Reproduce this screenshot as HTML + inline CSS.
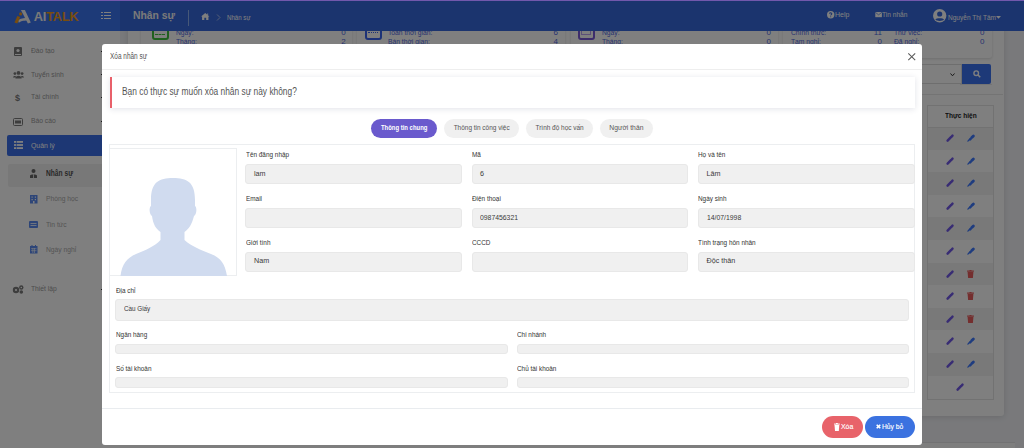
<!DOCTYPE html>
<html><head><meta charset="utf-8">
<style>
*{box-sizing:border-box;margin:0;padding:0}
html,body{width:1024px;height:448px;overflow:hidden;background:#f2f3f7;font-family:"Liberation Sans",sans-serif;position:relative}
.a{position:absolute}
.t{position:absolute;white-space:nowrap;line-height:1;transform-origin:0 50%}
.tc{position:absolute;white-space:nowrap;line-height:1;transform-origin:50% 50%;text-align:center}
svg{position:absolute;overflow:visible}
</style></head><body>

<!-- ============ BACKGROUND PAGE ============ -->
<div class="a" style="left:0;top:0;width:1024px;height:31px;z-index:3">

<div class="a" style="left:0;top:0;width:120px;height:31px;background:#3b75f1"></div>
<div class="a" style="left:120px;top:0;width:904px;height:31px;background:#3668dc"></div>

<!-- logo -->
<svg style="left:12px;top:7px" width="24" height="20" viewBox="0 0 24 20">
  <path d="M8.9 3.1 L12.9 3.1 L18.8 15.6 L15.9 16.6 Z" fill="#f2f2f2"/>
  <path d="M6.1 13.6 C7.6 12 9.6 11.3 14.8 11.1 L15.9 13.5 C10.8 13.6 8.9 14.1 6.8 15.8 Z" fill="#f2f2f2"/>
  <path d="M5.4 8.9 L8.2 10.1 L5.3 16.6 L2.5 15.4 Z" fill="#f29a1c"/>
  <circle cx="8.6" cy="6.9" r="1.55" fill="#f29a1c"/>
</svg>
<div class="t" style="left:33.8px;top:10.8px;font-size:12.8px;font-weight:700;color:#f2f2f2;letter-spacing:-0.2px">AI<span style="color:#f29a1c">TALK</span></div>

<!-- hamburger -->
<div class="a" style="left:101px;top:11.8px;width:2px;height:1.6px;background:#fff"></div>
<div class="a" style="left:103.5px;top:11.8px;width:7.5px;height:1.6px;background:#fff"></div>
<div class="a" style="left:101px;top:14.8px;width:2px;height:1.6px;background:#fff"></div>
<div class="a" style="left:103.5px;top:14.8px;width:7.5px;height:1.6px;background:#fff"></div>
<div class="a" style="left:101px;top:17.8px;width:2px;height:1.6px;background:#fff"></div>
<div class="a" style="left:103.5px;top:17.8px;width:7.5px;height:1.6px;background:#fff"></div>

<div class="t" style="left:133px;top:10.1px;font-size:11.5px;font-weight:700;color:#f4f4f4;transform:scaleX(.9)">Nhân sự</div>
<div class="a" style="left:187.6px;top:9.6px;width:1px;height:16px;background:#8fb0f0"></div>
<!-- home -->
<svg style="left:200.6px;top:13.2px" width="8.5" height="7" viewBox="0 0 9 7.5">
  <path d="M4.5 0 L9 3.7 L7.9 3.7 L7.9 7.5 L5.5 7.5 L5.5 5.2 L3.5 5.2 L3.5 7.5 L1.1 7.5 L1.1 3.7 L0 3.7 Z M6.6 0.6 L7.6 0.6 L7.6 2.4 L6.6 1.6 Z" fill="#fff"/>
</svg>
<svg style="left:216px;top:14px" width="5" height="7" viewBox="0 0 5 7">
  <path d="M1 0.5 L4 3.5 L1 6.5" stroke="#c8d4f0" stroke-width="0.8" fill="none"/>
</svg>
<div class="t" style="left:227.2px;top:15px;font-size:6.6px;color:#fff;transform:scaleX(.93)">Nhân sự</div>

<!-- right header -->
<svg style="left:827px;top:11px" width="7.4" height="7.4" viewBox="0 0 8 8">
  <circle cx="4" cy="4" r="4" fill="#fff"/>
  <path d="M2.8 3 C2.8 1.6 5.2 1.6 5.2 3 C5.2 4 4 4 4 5" stroke="#3668dc" stroke-width="1.1" fill="none"/>
  <circle cx="4" cy="6.3" r="0.6" fill="#3668dc"/>
</svg>
<div class="t" style="left:835px;top:10.9px;font-size:7.6px;color:#fff;transform:scaleX(.92)">Help</div>
<svg style="left:874.8px;top:12.2px" width="7.2" height="5.2" viewBox="0 0 7 5.5">
  <rect x="0" y="0" width="7" height="5.5" fill="#fff"/>
  <path d="M0 0.3 L3.5 3 L7 0.3" stroke="#3668dc" stroke-width="0.7" fill="none"/>
</svg>
<div class="t" style="left:882px;top:11px;font-size:7.6px;color:#fff;transform:scaleX(.87)">Tin nhắn</div>
<svg style="left:933.2px;top:8.6px" width="13.4" height="13.4" viewBox="0 0 14 14">
  <circle cx="7" cy="7" r="7" fill="#fff"/>
  <circle cx="7" cy="5.2" r="2.7" fill="#3668dc"/>
  <path d="M2.5 11.3 C3.3 9.3 10.7 9.3 11.5 11.3 C9.8 12.8 4.2 12.8 2.5 11.3 Z" fill="#3668dc"/>
</svg>
<div class="t" style="left:947.5px;top:13.5px;font-size:7.6px;color:#fff;transform:scaleX(.86)">Nguyễn Thị Tâm</div>
<svg style="left:995.8px;top:16.3px" width="5" height="3" viewBox="0 0 5 3">
  <path d="M0 0 L5 0 L2.5 2.8 Z" fill="#fff"/>
</svg>

</div>
<!-- sidebar -->
<div class="a" style="left:0;top:31px;width:120px;height:417px;background:#ffffff"></div>
<div id="sb">
  <div class="t" style="left:31px;top:47px;font-size:8px;color:#999;transform:scaleX(.84)">Đào tạo</div>
  <div class="t" style="left:31px;top:70.5px;font-size:8px;color:#999;transform:scaleX(.84)">Tuyển sinh</div>
  <div class="t" style="left:31px;top:93.4px;font-size:8px;color:#999;transform:scaleX(.84)">Tài chính</div>
  <div class="t" style="left:31px;top:117.4px;font-size:8px;color:#999;transform:scaleX(.84)">Báo cáo</div>
  <!-- icons -->
  <svg style="left:14px;top:46.5px" width="8" height="9" viewBox="0 0 8 9"><rect x="0" y="0" width="8" height="9" rx="1" fill="#7a7a7a"/><circle cx="4" cy="3.5" r="1.6" fill="#fff"/><rect x="1" y="7" width="6" height="1" fill="#fff"/></svg>
  <svg style="left:12.8px;top:71.3px" width="11" height="7.5" viewBox="0 0 11 7.5"><circle cx="5.5" cy="1.9" r="1.9" fill="#7a7a7a"/><circle cx="1.9" cy="2.6" r="1.4" fill="#7a7a7a"/><circle cx="9.1" cy="2.6" r="1.4" fill="#7a7a7a"/><path d="M2.4 7.5 C2.4 3.9 8.6 3.9 8.6 7.5 Z" fill="#7a7a7a"/><path d="M0 6.6 C0 4.3 3.4 4.3 3.4 6.6 Z" fill="#7a7a7a"/><path d="M7.6 6.6 C7.6 4.3 11 4.3 11 6.6 Z" fill="#7a7a7a"/></svg>
  <div class="t" style="left:15px;top:93.5px;font-size:9px;font-weight:700;color:#7a7a7a">$</div>
  <svg style="left:13px;top:117.5px" width="10" height="8" viewBox="0 0 10 8"><rect x="0.5" y="0.5" width="9" height="7" rx="1" fill="none" stroke="#7a7a7a" stroke-width="1"/><rect x="2" y="2.5" width="6" height="3" fill="#7a7a7a"/></svg>
  <div class="t" style="left:101px;top:50.5px;width:1.2px;height:1.2px;background:#333"></div>
  <div class="t" style="left:101px;top:74px;width:1.2px;height:1.2px;background:#333"></div>
  <div class="t" style="left:101px;top:97px;width:1.2px;height:1.2px;background:#333"></div>
  <div class="t" style="left:101px;top:121px;width:1.2px;height:1.2px;background:#333"></div>
  <div class="t" style="left:101px;top:289px;width:1.2px;height:1.2px;background:#333"></div>

  <div class="a" style="left:7px;top:134.5px;width:113px;height:21.5px;background:#3b6ee8;border-radius:2px"></div>
  <svg style="left:13.5px;top:141px" width="9" height="8" viewBox="0 0 9 8"><rect x="0" y="0" width="9" height="1.8" fill="#fff"/><rect x="0" y="3.1" width="9" height="1.8" fill="#fff"/><rect x="0" y="6.2" width="9" height="1.8" fill="#fff"/><rect x="2" y="0" width="0.6" height="8" fill="#3b6ee8"/></svg>
  <div class="t" style="left:31px;top:141.5px;font-size:8px;color:#fff;transform:scaleX(.86)">Quản lý</div>

  <div class="a" style="left:8px;top:163.5px;width:112px;height:23px;background:#f0f0f0;border-radius:2px"></div>
  <svg style="left:29.5px;top:169px" width="7" height="9" viewBox="0 0 7 9"><circle cx="3.5" cy="2" r="2" fill="#666"/><path d="M0 9 L0 6.5 C0 5 7 5 7 6.5 L7 9 Z" fill="#666"/><rect x="3.1" y="5.3" width="0.8" height="3.7" fill="#f0f0f0"/></svg>
  <div class="t" style="left:45.5px;top:169.4px;font-size:8.3px;font-weight:700;color:#505050;transform:scaleX(.8)">Nhân sự</div>
  <svg style="left:29.5px;top:195px" width="7.5" height="8.5" viewBox="0 0 7.5 8.5"><rect x="0" y="0" width="7.5" height="8.5" fill="#5a8af0"/><rect x="1.5" y="1.5" width="1.2" height="1.2" fill="#fff"/><rect x="4.8" y="1.5" width="1.2" height="1.2" fill="#fff"/><rect x="1.5" y="4" width="1.2" height="1.2" fill="#fff"/><rect x="4.8" y="4" width="1.2" height="1.2" fill="#fff"/><rect x="3" y="6" width="1.5" height="2.5" fill="#fff"/></svg>
  <div class="t" style="left:45.5px;top:195.2px;font-size:8px;color:#aaa;transform:scaleX(.84)">Phòng học</div>
  <svg style="left:29px;top:221px" width="9" height="7" viewBox="0 0 9 7"><rect x="0" y="0" width="9" height="7" rx="1" fill="#5a8af0"/><rect x="1.5" y="2" width="6" height="0.8" fill="#fff"/><rect x="1.5" y="4" width="6" height="0.8" fill="#fff"/></svg>
  <div class="t" style="left:45.5px;top:220.5px;font-size:8px;color:#aaa;transform:scaleX(.84)">Tin tức</div>
  <svg style="left:29.5px;top:245px" width="7.5" height="8.5" viewBox="0 0 7.5 8.5"><rect x="0" y="1" width="7.5" height="7.5" fill="#5a8af0"/><rect x="1.5" y="0" width="1" height="2" fill="#5a8af0"/><rect x="5" y="0" width="1" height="2" fill="#5a8af0"/><rect x="1" y="3.5" width="5.5" height="0.6" fill="#fff"/><rect x="1" y="5.5" width="5.5" height="0.6" fill="#fff"/><rect x="2.6" y="3" width="0.6" height="5" fill="#fff"/><rect x="4.3" y="3" width="0.6" height="5" fill="#fff"/></svg>
  <div class="t" style="left:45.5px;top:245.6px;font-size:8px;color:#aaa;transform:scaleX(.84)">Ngày nghỉ</div>

  <svg style="left:12px;top:284.5px" width="12" height="9" viewBox="0 0 12 9"><circle cx="4" cy="5" r="3.2" fill="#7a7a7a"/><circle cx="4" cy="5" r="1.1" fill="#fff"/><circle cx="9.3" cy="2.5" r="2.2" fill="#7a7a7a"/><circle cx="9.3" cy="2.5" r="0.8" fill="#fff"/><circle cx="9.3" cy="7" r="1.8" fill="#7a7a7a"/></svg>
  <div class="t" style="left:31px;top:285px;font-size:8px;color:#999;transform:scaleX(.84)">Thiết lập</div>
</div>

<!-- content cards -->

<div class="a" style="left:128px;top:20px;width:875.5px;height:396px;background:#fff;border-radius:3px;box-shadow:0 1px 6px rgba(0,0,0,.13)"></div>
<div class="a" style="left:141px;top:20px;width:211px;height:37.8px;background:#fff;border-radius:3px;box-shadow:0 1px 3px rgba(0,0,0,.14)"></div>
<div class="a" style="left:357px;top:20px;width:208px;height:37.8px;background:#fff;border-radius:3px;box-shadow:0 1px 3px rgba(0,0,0,.14)"></div>
<div class="a" style="left:571px;top:20px;width:207px;height:37.8px;background:#fff;border-radius:3px;box-shadow:0 1px 3px rgba(0,0,0,.14)"></div>
<div class="a" style="left:783px;top:20px;width:209px;height:37.8px;background:#fff;border-radius:3px;box-shadow:0 1px 3px rgba(0,0,0,.14)"></div>
<div class="a" style="left:151.6px;top:26px;width:17px;height:14.4px;border:2.2px solid #3fc13f;border-radius:3px;background:#fff"></div>
<div class="a" style="left:155px;top:34px;width:10px;height:0;border-top:1px dashed #3fc13f"></div>
<div class="t" style="left:176px;top:29.0px;font-size:8px;color:#5068e0;transform:scaleX(.84)">Ngày:</div>
<div class="t" style="right:678.4px;top:29.0px;font-size:8px;color:#5068e0">0</div>
<div class="t" style="left:176px;top:37.7px;font-size:8px;color:#5068e0;transform:scaleX(.84)">Tháng:</div>
<div class="t" style="right:678.4px;top:37.7px;font-size:8px;color:#5068e0">2</div>
<div class="a" style="left:364.5px;top:26px;width:17.5px;height:14.4px;border:2.2px solid #3a64f0;border-radius:3px;background:#fff"></div>
<div class="a" style="left:368px;top:32px;width:10px;height:0;border-top:1px dotted #3a64f0"></div>
<div class="t" style="left:388px;top:29.0px;font-size:8px;color:#5068e0;transform:scaleX(.84)">Toàn thời gian:</div>
<div class="t" style="right:466px;top:29.0px;font-size:8px;color:#5068e0">6</div>
<div class="t" style="left:388px;top:37.7px;font-size:8px;color:#5068e0;transform:scaleX(.84)">Bán thời gian:</div>
<div class="t" style="right:466px;top:37.7px;font-size:8px;color:#5068e0">4</div>
<div class="a" style="left:578px;top:26px;width:16.7px;height:14.2px;border:2.2px solid #7a5ad8;border-radius:3px;background:#fff"></div>
<div class="a" style="left:581px;top:29px;width:10px;height:6px;border:1px solid #b8a0f0"></div>
<div class="t" style="left:602px;top:29.0px;font-size:8px;color:#5068e0;transform:scaleX(.84)">Ngày:</div>
<div class="t" style="right:253px;top:29.0px;font-size:8px;color:#5068e0">0</div>
<div class="t" style="left:602px;top:37.7px;font-size:8px;color:#5068e0;transform:scaleX(.84)">Tháng:</div>
<div class="t" style="right:253px;top:37.7px;font-size:8px;color:#5068e0">0</div>
<div class="t" style="left:791px;top:29.0px;font-size:8px;color:#5068e0;transform:scaleX(.84)">Chính thức:</div>
<div class="t" style="right:142px;top:29.0px;font-size:8px;color:#5068e0">11</div>
<div class="t" style="left:791px;top:37.7px;font-size:8px;color:#5068e0;transform:scaleX(.84)">Tạm nghỉ:</div>
<div class="t" style="right:142px;top:37.7px;font-size:8px;color:#5068e0">0</div>
<div class="t" style="left:893.5px;top:29.0px;font-size:8px;color:#5068e0;transform:scaleX(.84)">Thử việc:</div>
<div class="t" style="right:39.5px;top:29.0px;font-size:8px;color:#5068e0">0</div>
<div class="t" style="left:893.5px;top:37.7px;font-size:8px;color:#5068e0;transform:scaleX(.84)">Đã nghỉ:</div>
<div class="t" style="right:39.5px;top:37.7px;font-size:8px;color:#5068e0">0</div>

<div class="a" style="left:120px;top:442.3px;width:895px;height:6px;background:#fdfdfd;border-top:1px solid #e4e4e6"></div>
<!-- search -->
<div class="a" style="left:880px;top:64.2px;width:82px;height:20.3px;background:#fff;border:1px solid #ddd"></div>
<svg style="left:949.5px;top:72.5px" width="5" height="3.5" viewBox="0 0 5 3.5"><path d="M0.5 0.5 L2.5 2.8 L4.5 0.5" stroke="#333" stroke-width="1" fill="none"/></svg>
<div class="a" style="left:961.8px;top:64.2px;width:29px;height:20.3px;background:#3a72f0;border-radius:0 2px 2px 0"></div>
<svg style="left:972.5px;top:70px" width="8" height="8" viewBox="0 0 8 8"><circle cx="3.2" cy="3.2" r="2.3" stroke="#fff" stroke-width="1.4" fill="none"/><path d="M4.8 4.8 L7.2 7.2" stroke="#fff" stroke-width="1.6"/></svg>
<!-- panel -->
<div class="a" style="left:128px;top:94px;width:875px;height:1px;background:#e8e8e8"></div>
<div class="a" style="left:960px;top:84.3px;width:32px;height:1px;background:#e8e8e8"></div>
<div class="a" style="left:926.7px;top:104.5px;width:67px;height:295px;border:1px solid #e4e4e4;background:#fff"></div>
<div class="t" style="left:945px;top:111.5px;font-size:8px;font-weight:700;color:#222;transform:scaleX(.82)">Thực hiện</div>
<div class="a" style="left:927.7px;top:127px;width:65px;height:22.6px;background:#f2f2f2"></div>
<div class="a" style="left:927.7px;top:149.6px;width:65px;height:22.6px;background:#fff"></div>
<div class="a" style="left:927.7px;top:172.2px;width:65px;height:22.6px;background:#f2f2f2"></div>
<div class="a" style="left:927.7px;top:194.8px;width:65px;height:22.6px;background:#fff"></div>
<div class="a" style="left:927.7px;top:217.4px;width:65px;height:22.6px;background:#f2f2f2"></div>
<div class="a" style="left:927.7px;top:240px;width:65px;height:22.6px;background:#fff"></div>
<div class="a" style="left:927.7px;top:262.6px;width:65px;height:22.6px;background:#f2f2f2"></div>
<div class="a" style="left:927.7px;top:285.2px;width:65px;height:22.6px;background:#fff"></div>
<div class="a" style="left:927.7px;top:307.8px;width:65px;height:22.6px;background:#f2f2f2"></div>
<div class="a" style="left:927.7px;top:330.4px;width:65px;height:22.6px;background:#fff"></div>
<div class="a" style="left:927.7px;top:353px;width:65px;height:22.6px;background:#f2f2f2"></div>
<div class="a" style="left:927.7px;top:375.6px;width:65px;height:22.6px;background:#fff"></div>
<div class="a" style="left:927.7px;top:127px;width:65px;height:0;border-top:1px solid #e4e4e4"></div>
<!-- pencil icons -->
<svg style="left:946px;top:134px" width="8" height="8" viewBox="0 0 8 8"><path d="M1.6 6.6 L5 3.2" stroke="#7058e8" stroke-width="2.5" stroke-linecap="round"/><path d="M5.9 2.3 L6.5 1.7" stroke="#7058e8" stroke-width="2.5" stroke-linecap="round"/></svg>
<svg style="left:967px;top:134px" width="8" height="8" viewBox="0 0 8 8"><path d="M3.1 5.3 L3.6 4.8" stroke="#3c78ff" stroke-width="2.6" stroke-linecap="round"/><path d="M4.8 3.6 L6.4 2" stroke="#3c78ff" stroke-width="2.8" stroke-linecap="round"/><path d="M0.9 7.1 L2.2 5.8" stroke="#3c78ff" stroke-width="1.3" stroke-linecap="round"/></svg>
<svg style="left:946px;top:156.6px" width="8" height="8" viewBox="0 0 8 8"><path d="M1.6 6.6 L5 3.2" stroke="#7058e8" stroke-width="2.5" stroke-linecap="round"/><path d="M5.9 2.3 L6.5 1.7" stroke="#7058e8" stroke-width="2.5" stroke-linecap="round"/></svg>
<svg style="left:967px;top:156.6px" width="8" height="8" viewBox="0 0 8 8"><path d="M3.1 5.3 L3.6 4.8" stroke="#3c78ff" stroke-width="2.6" stroke-linecap="round"/><path d="M4.8 3.6 L6.4 2" stroke="#3c78ff" stroke-width="2.8" stroke-linecap="round"/><path d="M0.9 7.1 L2.2 5.8" stroke="#3c78ff" stroke-width="1.3" stroke-linecap="round"/></svg>
<svg style="left:946px;top:179.2px" width="8" height="8" viewBox="0 0 8 8"><path d="M1.6 6.6 L5 3.2" stroke="#7058e8" stroke-width="2.5" stroke-linecap="round"/><path d="M5.9 2.3 L6.5 1.7" stroke="#7058e8" stroke-width="2.5" stroke-linecap="round"/></svg>
<svg style="left:967px;top:179.2px" width="8" height="8" viewBox="0 0 8 8"><path d="M3.1 5.3 L3.6 4.8" stroke="#3c78ff" stroke-width="2.6" stroke-linecap="round"/><path d="M4.8 3.6 L6.4 2" stroke="#3c78ff" stroke-width="2.8" stroke-linecap="round"/><path d="M0.9 7.1 L2.2 5.8" stroke="#3c78ff" stroke-width="1.3" stroke-linecap="round"/></svg>
<svg style="left:946px;top:201.8px" width="8" height="8" viewBox="0 0 8 8"><path d="M1.6 6.6 L5 3.2" stroke="#7058e8" stroke-width="2.5" stroke-linecap="round"/><path d="M5.9 2.3 L6.5 1.7" stroke="#7058e8" stroke-width="2.5" stroke-linecap="round"/></svg>
<svg style="left:967px;top:201.8px" width="8" height="8" viewBox="0 0 8 8"><path d="M3.1 5.3 L3.6 4.8" stroke="#3c78ff" stroke-width="2.6" stroke-linecap="round"/><path d="M4.8 3.6 L6.4 2" stroke="#3c78ff" stroke-width="2.8" stroke-linecap="round"/><path d="M0.9 7.1 L2.2 5.8" stroke="#3c78ff" stroke-width="1.3" stroke-linecap="round"/></svg>
<svg style="left:946px;top:224.4px" width="8" height="8" viewBox="0 0 8 8"><path d="M1.6 6.6 L5 3.2" stroke="#7058e8" stroke-width="2.5" stroke-linecap="round"/><path d="M5.9 2.3 L6.5 1.7" stroke="#7058e8" stroke-width="2.5" stroke-linecap="round"/></svg>
<svg style="left:967px;top:224.4px" width="8" height="8" viewBox="0 0 8 8"><path d="M3.1 5.3 L3.6 4.8" stroke="#3c78ff" stroke-width="2.6" stroke-linecap="round"/><path d="M4.8 3.6 L6.4 2" stroke="#3c78ff" stroke-width="2.8" stroke-linecap="round"/><path d="M0.9 7.1 L2.2 5.8" stroke="#3c78ff" stroke-width="1.3" stroke-linecap="round"/></svg>
<svg style="left:946px;top:247px" width="8" height="8" viewBox="0 0 8 8"><path d="M1.6 6.6 L5 3.2" stroke="#7058e8" stroke-width="2.5" stroke-linecap="round"/><path d="M5.9 2.3 L6.5 1.7" stroke="#7058e8" stroke-width="2.5" stroke-linecap="round"/></svg>
<svg style="left:967px;top:247px" width="8" height="8" viewBox="0 0 8 8"><path d="M3.1 5.3 L3.6 4.8" stroke="#3c78ff" stroke-width="2.6" stroke-linecap="round"/><path d="M4.8 3.6 L6.4 2" stroke="#3c78ff" stroke-width="2.8" stroke-linecap="round"/><path d="M0.9 7.1 L2.2 5.8" stroke="#3c78ff" stroke-width="1.3" stroke-linecap="round"/></svg>
<svg style="left:946px;top:269.6px" width="8" height="8" viewBox="0 0 8 8"><path d="M1.6 6.6 L5 3.2" stroke="#7058e8" stroke-width="2.5" stroke-linecap="round"/><path d="M5.9 2.3 L6.5 1.7" stroke="#7058e8" stroke-width="2.5" stroke-linecap="round"/></svg>
<svg style="left:966.8px;top:269.6px" width="7" height="8" viewBox="0 0 7 8"><rect x="0" y="0.4" width="7" height="1.3" rx="0.4" fill="#e85c5c"/><rect x="2.5" y="0" width="2" height="1" fill="#e85c5c"/><path d="M0.6 2.1 L6.4 2.1 L5.9 8 L1.1 8 Z" fill="#e85c5c"/></svg>
<svg style="left:946px;top:292.2px" width="8" height="8" viewBox="0 0 8 8"><path d="M1.6 6.6 L5 3.2" stroke="#7058e8" stroke-width="2.5" stroke-linecap="round"/><path d="M5.9 2.3 L6.5 1.7" stroke="#7058e8" stroke-width="2.5" stroke-linecap="round"/></svg>
<svg style="left:966.8px;top:292.2px" width="7" height="8" viewBox="0 0 7 8"><rect x="0" y="0.4" width="7" height="1.3" rx="0.4" fill="#e85c5c"/><rect x="2.5" y="0" width="2" height="1" fill="#e85c5c"/><path d="M0.6 2.1 L6.4 2.1 L5.9 8 L1.1 8 Z" fill="#e85c5c"/></svg>
<svg style="left:946px;top:314.8px" width="8" height="8" viewBox="0 0 8 8"><path d="M1.6 6.6 L5 3.2" stroke="#7058e8" stroke-width="2.5" stroke-linecap="round"/><path d="M5.9 2.3 L6.5 1.7" stroke="#7058e8" stroke-width="2.5" stroke-linecap="round"/></svg>
<svg style="left:966.8px;top:314.8px" width="7" height="8" viewBox="0 0 7 8"><rect x="0" y="0.4" width="7" height="1.3" rx="0.4" fill="#e85c5c"/><rect x="2.5" y="0" width="2" height="1" fill="#e85c5c"/><path d="M0.6 2.1 L6.4 2.1 L5.9 8 L1.1 8 Z" fill="#e85c5c"/></svg>
<svg style="left:946px;top:337.4px" width="8" height="8" viewBox="0 0 8 8"><path d="M1.6 6.6 L5 3.2" stroke="#7058e8" stroke-width="2.5" stroke-linecap="round"/><path d="M5.9 2.3 L6.5 1.7" stroke="#7058e8" stroke-width="2.5" stroke-linecap="round"/></svg>
<svg style="left:967px;top:337.4px" width="8" height="8" viewBox="0 0 8 8"><path d="M3.1 5.3 L3.6 4.8" stroke="#3c78ff" stroke-width="2.6" stroke-linecap="round"/><path d="M4.8 3.6 L6.4 2" stroke="#3c78ff" stroke-width="2.8" stroke-linecap="round"/><path d="M0.9 7.1 L2.2 5.8" stroke="#3c78ff" stroke-width="1.3" stroke-linecap="round"/></svg>
<svg style="left:946px;top:360px" width="8" height="8" viewBox="0 0 8 8"><path d="M1.6 6.6 L5 3.2" stroke="#7058e8" stroke-width="2.5" stroke-linecap="round"/><path d="M5.9 2.3 L6.5 1.7" stroke="#7058e8" stroke-width="2.5" stroke-linecap="round"/></svg>
<svg style="left:967px;top:360px" width="8" height="8" viewBox="0 0 8 8"><path d="M3.1 5.3 L3.6 4.8" stroke="#3c78ff" stroke-width="2.6" stroke-linecap="round"/><path d="M4.8 3.6 L6.4 2" stroke="#3c78ff" stroke-width="2.8" stroke-linecap="round"/><path d="M0.9 7.1 L2.2 5.8" stroke="#3c78ff" stroke-width="1.3" stroke-linecap="round"/></svg>
<svg style="left:956px;top:382.6px" width="8" height="8" viewBox="0 0 8 8"><path d="M1.6 6.6 L5 3.2" stroke="#7058e8" stroke-width="2.5" stroke-linecap="round"/><path d="M5.9 2.3 L6.5 1.7" stroke="#7058e8" stroke-width="2.5" stroke-linecap="round"/></svg>

<div class="a" style="left:0;top:0;width:1024px;height:448px;z-index:5">
<!-- overlay -->
<div class="a" style="left:0;top:0;width:1024px;height:448px;background:rgba(0,0,0,.5)"></div>

<div class="a" style="left:0;top:0;width:1024px;height:1.2px;background:#7258ac"></div>
<!-- ============ MODAL ============ -->
<div class="a" style="left:102px;top:44px;width:820px;height:401px;background:#fff;border-radius:3px"></div>
<div class="t" style="left:110px;top:52.3px;font-size:8.5px;color:#555;transform:scaleX(.76)">Xóa nhân sự</div>
<svg style="left:907.5px;top:53.2px" width="7.5" height="7.5" viewBox="0 0 7.5 7.5"><path d="M0.3 0.3 L7.2 7.2 M7.2 0.3 L0.3 7.2" stroke="#5a5a5a" stroke-width="1.05"/></svg>
<div class="a" style="left:102px;top:69px;width:820px;height:1px;background:#eeeeee"></div>

<!-- alert -->
<div class="a" style="left:110px;top:77px;width:805px;height:30.5px;background:#fff;box-shadow:0 1px 6px rgba(40,50,90,.14);border-left:2px solid #e8606a"></div>
<div class="t" style="left:122px;top:86.8px;font-size:10px;color:#555;transform:scaleX(.836)">Bạn có thực sự muốn xóa nhân sự này không?</div>

<!-- tabs -->
<div class="a" style="left:370.6px;top:118.6px;width:66.4px;height:19.5px;border-radius:10px;background:#6a5acd"></div>
<div class="tc" style="left:370.6px;top:123.9px;width:66.4px;font-size:7.5px;font-weight:700;color:#fff;transform:scaleX(.79)">Thông tin chung</div>
<div class="a" style="left:443.6px;top:118.6px;width:75.3px;height:19.5px;border-radius:10px;background:#f0f0f0"></div>
<div class="tc" style="left:443.6px;top:123.9px;width:75.3px;font-size:7.5px;color:#555;transform:scaleX(.86)">Thông tin công việc</div>
<div class="a" style="left:526.1px;top:118.6px;width:67.2px;height:19.5px;border-radius:10px;background:#f0f0f0"></div>
<div class="tc" style="left:526.1px;top:123.9px;width:67.2px;font-size:7.5px;color:#555;transform:scaleX(.86)">Trình độ học vấn</div>
<div class="a" style="left:600.3px;top:118.6px;width:52.7px;height:19.5px;border-radius:10px;background:#f0f0f0"></div>
<div class="tc" style="left:600.3px;top:123.9px;width:52.7px;font-size:7.5px;color:#555;transform:scaleX(.9)">Người thân</div>

<!-- form box -->
<div class="a" style="left:109px;top:144px;width:806px;height:249px;border:1px solid #eceef0"></div>
<div class="a" style="left:109px;top:148.3px;width:128.3px;height:128px;border:1px solid #eceef0"></div>
<svg style="left:111px;top:170px" width="126" height="106" viewBox="0 0 126 106">
  <path d="M40 30 C40 12 48 8 62 8 C76 8 84 12 84 30 L84 36 C86 37 86 44 83 46 C81 54 78 59 73.5 62 L73.5 70 C80 76 90 80 100 84 C110 88 114 94 116 106 L9.5 106 C11 94 16 88 25 84 C35 80 44 76 49.5 70 L49.5 62 C45 59 42 54 41 46 C38 44 38 37 40 36 Z" fill="#d0dbef"/>
</svg>

<!-- fields row 1 -->
<div class="t" style="left:245.5px;top:151px;font-size:8px;color:#333;transform:scaleX(.8)">Tên đăng nhập</div>
<div class="a" style="left:245px;top:164px;width:217px;height:20px;background:#f0f0f0;border:1px solid #e8e8e8;border-radius:3px"></div>
<div class="t" style="left:254px;top:169.8px;font-size:7.2px;color:#3a3a3a">lam</div>
<div class="t" style="left:472px;top:151px;font-size:8px;color:#333;transform:scaleX(.8)">Mã</div>
<div class="a" style="left:472px;top:164px;width:216px;height:20px;background:#f0f0f0;border:1px solid #e8e8e8;border-radius:3px"></div>
<div class="t" style="left:480px;top:169.8px;font-size:7.2px;color:#3a3a3a">6</div>
<div class="t" style="left:698px;top:151px;font-size:8px;color:#333;transform:scaleX(.8)">Họ và tên</div>
<div class="a" style="left:698px;top:164px;width:216.5px;height:20px;background:#f0f0f0;border:1px solid #e8e8e8;border-radius:3px"></div>
<div class="t" style="left:706.5px;top:169.8px;font-size:7.2px;color:#3a3a3a">Lâm</div>
<!-- row 2 -->
<div class="t" style="left:245.5px;top:194.5px;font-size:8px;color:#333;transform:scaleX(.8)">Email</div>
<div class="a" style="left:245px;top:207.8px;width:217px;height:20px;background:#f0f0f0;border:1px solid #e8e8e8;border-radius:3px"></div>
<div class="t" style="left:472px;top:194.5px;font-size:8px;color:#333;transform:scaleX(.8)">Điện thoại</div>
<div class="a" style="left:472px;top:207.8px;width:216px;height:20px;background:#f0f0f0;border:1px solid #e8e8e8;border-radius:3px"></div>
<div class="t" style="left:480px;top:213.6px;font-size:7.2px;color:#3a3a3a;transform:scaleX(.95)">0987456321</div>
<div class="t" style="left:698px;top:194.5px;font-size:8px;color:#333;transform:scaleX(.8)">Ngày sinh</div>
<div class="a" style="left:698px;top:207.8px;width:216.5px;height:20px;background:#f0f0f0;border:1px solid #e8e8e8;border-radius:3px"></div>
<div class="t" style="left:706.5px;top:213.6px;font-size:7.2px;color:#3a3a3a;transform:scaleX(.95)">14/07/1998</div>
<!-- row 3 -->
<div class="t" style="left:245.5px;top:238.5px;font-size:8px;color:#333;transform:scaleX(.8)">Giới tính</div>
<div class="a" style="left:245px;top:251.5px;width:217px;height:20.3px;background:#f0f0f0;border:1px solid #e8e8e8;border-radius:3px"></div>
<div class="t" style="left:254px;top:257.3px;font-size:7.2px;color:#3a3a3a">Nam</div>
<div class="t" style="left:472px;top:238.5px;font-size:8px;color:#333;transform:scaleX(.8)">CCCD</div>
<div class="a" style="left:472px;top:251.5px;width:216px;height:20.3px;background:#f0f0f0;border:1px solid #e8e8e8;border-radius:3px"></div>
<div class="t" style="left:698px;top:238.5px;font-size:8px;color:#333;transform:scaleX(.8)">Tình trạng hôn nhân</div>
<div class="a" style="left:698px;top:251.5px;width:216.5px;height:20.3px;background:#f0f0f0;border:1px solid #e8e8e8;border-radius:3px"></div>
<div class="t" style="left:706.5px;top:257.3px;font-size:7.2px;color:#3a3a3a">Độc thân</div>

<!-- address -->
<div class="t" style="left:116px;top:286.5px;font-size:7.5px;color:#333;transform:scaleX(.85)">Địa chỉ</div>
<div class="a" style="left:115px;top:299.2px;width:794px;height:21.4px;background:#f0f0f0;border:1px solid #e8e8e8;border-radius:3px"></div>
<div class="t" style="left:123.7px;top:304.8px;font-size:7px;color:#3a3a3a;transform:scaleX(.9)">Cầu Giấy</div>

<div class="t" style="left:116px;top:331px;font-size:7.5px;color:#333;transform:scaleX(.85)">Ngân hàng</div>
<div class="a" style="left:115px;top:343.9px;width:392.5px;height:10.3px;background:#f0f0f0;border:1px solid #e8e8e8;border-radius:3px"></div>
<div class="t" style="left:517px;top:331px;font-size:7.5px;color:#333;transform:scaleX(.85)">Chi nhánh</div>
<div class="a" style="left:517px;top:343.9px;width:392px;height:10.3px;background:#f0f0f0;border:1px solid #e8e8e8;border-radius:3px"></div>
<div class="t" style="left:116px;top:364.5px;font-size:7.5px;color:#333;transform:scaleX(.85)">Số tài khoản</div>
<div class="a" style="left:115px;top:377.1px;width:392.5px;height:10.7px;background:#f0f0f0;border:1px solid #e8e8e8;border-radius:3px"></div>
<div class="t" style="left:517px;top:364.5px;font-size:7.5px;color:#333;transform:scaleX(.85)">Chủ tài khoản</div>
<div class="a" style="left:517px;top:377.1px;width:392px;height:10.7px;background:#f0f0f0;border:1px solid #e8e8e8;border-radius:3px"></div>

<!-- footer -->
<div class="a" style="left:102px;top:408px;width:820px;height:1px;background:#e9ecef"></div>
<div class="a" style="left:822px;top:416.3px;width:41.3px;height:21.5px;border-radius:11px;background:#e8636a"></div>
<svg style="left:833.5px;top:422.5px" width="5.8" height="8" viewBox="0 0 5.8 8"><rect x="0" y="0.6" width="5.8" height="1" fill="#fff"/><rect x="2" y="0" width="1.8" height="1" fill="#fff"/><path d="M0.5 2 L5.3 2 L4.8 8 L1 8 Z" fill="#fff"/></svg>
<div class="t" style="left:840.5px;top:422.6px;font-size:8px;font-weight:400;color:#fff;transform:scaleX(.86);-webkit-text-stroke:0.15px #fff">Xóa</div>
<div class="a" style="left:865px;top:416.3px;width:49.7px;height:21.5px;border-radius:11px;background:#3b72e0"></div>
<svg style="left:875.9px;top:423.9px" width="5" height="5" viewBox="0 0 5 5"><path d="M0.7 0.7 L4.3 4.3 M4.3 0.7 L0.7 4.3" stroke="#fff" stroke-width="1.6"/></svg>
<div class="t" style="left:882px;top:422.6px;font-size:8px;font-weight:400;color:#fff;transform:scaleX(.84);-webkit-text-stroke:0.15px #fff">Hủy bỏ</div>
</div>
</body></html>
